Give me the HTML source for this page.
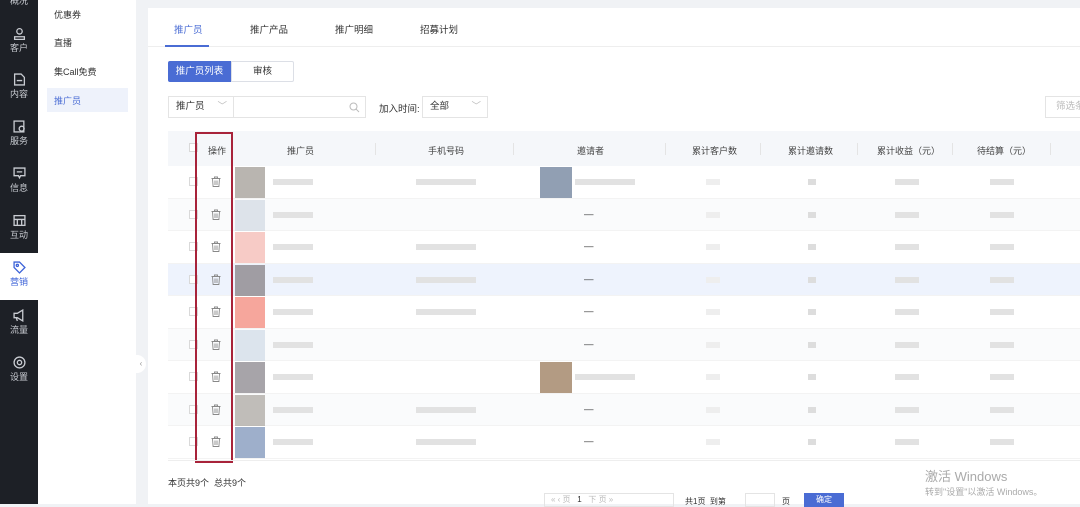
<!DOCTYPE html><html><head><meta charset="utf-8"><style>
*{margin:0;padding:0;box-sizing:border-box}
body{width:1080px;height:504px;overflow:hidden;background:#f0f2f5;font-family:"Liberation Sans","Noto Sans CJK SC",sans-serif;font-size:9.5px;color:#333;position:relative}
.a{position:absolute;white-space:nowrap}
.sb{left:0;top:0;width:38px;height:504px;background:#1d2026}
.ni{position:absolute;left:0;width:38px;text-align:center;color:#c9ccd2;font-size:9px}
.ni svg{display:block;margin:0 auto 1px}
.sm{left:38px;top:0;width:98px;height:504px;background:#fff}
.sm div{position:absolute;left:16px;font-size:9px;color:#333}
.card{left:148px;top:8px;width:932px;height:496px;background:#fff}
.g{background:#e2e2e2;position:absolute}
.row{position:absolute;left:168px;width:912px;height:32.5px;border-bottom:1px solid #f3f3f3}
.cb{position:absolute;left:21px;width:9px;height:9px;border:1px solid #d9d9d9;background:#fff}
.th{position:absolute;top:144px;font-size:9px;color:#444}
</style></head><body>
<div class="a sb"></div>
<div class="ni" style="top:-6px">概况</div>
<div class="ni" style="top:27px"><svg width="13" height="13" viewBox="0 0 12 12" fill="none" stroke="#c9ccd2" stroke-width="1.2"><circle cx="6" cy="4" r="2.5"/><path d="M1.5 11.5V9h9v2.5z"/></svg>客户</div>
<div class="ni" style="top:73px"><svg width="13" height="13" viewBox="0 0 12 12" fill="none" stroke="#c9ccd2" stroke-width="1.2"><path d="M1.5 1h6l3 3v7h-9z M3.5 7h5"/></svg>内容</div>
<div class="ni" style="top:120px"><svg width="13" height="13" viewBox="0 0 12 12" fill="none" stroke="#c9ccd2" stroke-width="1.2"><rect x="1" y="1" width="9" height="10"/><circle cx="8" cy="8" r="2.3"/></svg>服务</div>
<div class="ni" style="top:167px"><svg width="13" height="13" viewBox="0 0 12 12" fill="none" stroke="#c9ccd2" stroke-width="1.2"><path d="M1 1h10v7H7l-1 2-1-2H1z M3.5 4.5h5"/></svg>信息</div>
<div class="ni" style="top:214px"><svg width="13" height="13" viewBox="0 0 12 12" fill="none" stroke="#c9ccd2" stroke-width="1.2"><rect x="1" y="1.5" width="10" height="9"/><path d="M1 5h10M4 5v5M8 5v5"/></svg>互动</div>
<div class="a" style="left:0;top:253px;width:38px;height:47px;background:#fff"></div>
<div class="ni" style="top:261px;color:#3d63d8"><svg width="13" height="13" viewBox="0 0 12 12" fill="none" stroke="#3d63d8" stroke-width="1.2"><path d="M1 1h5l5 5-5 5-5-5z"/><circle cx="4" cy="4" r="1"/></svg>营销</div>
<div class="ni" style="top:309px"><svg width="13" height="13" viewBox="0 0 12 12" fill="none" stroke="#c9ccd2" stroke-width="1.2"><path d="M1 4h3l5-3v10L4 8H1z M3 8l1 3"/></svg>流量</div>
<div class="ni" style="top:356px"><svg width="13" height="13" viewBox="0 0 12 12" fill="none" stroke="#c9ccd2" stroke-width="1.2"><circle cx="6" cy="6" r="5"/><circle cx="6" cy="6" r="2"/></svg>设置</div>

<div class="a sm">
<div style="top:8px">优惠券</div><div style="top:36px">直播</div><div style="top:65px">集Call免费</div>
<div style="left:9px;top:88px;width:81px;height:24px;background:#eef2fb"></div>
<div style="top:94px;color:#4a6cd4">推广员</div>
</div>
<div class="a" style="left:136px;top:355px;width:10px;height:18px;background:#fff;border-radius:0 9px 9px 0;color:#999;font-size:8px;line-height:18px;text-align:center">‹</div>

<div class="a card"></div>
<div class="a" style="left:148px;top:46px;width:932px;height:1px;background:#eee"></div>
<div class="a" style="left:174px;top:22px;color:#4a6cd4">推广员</div>
<div class="a" style="left:250px;top:22px">推广产品</div>
<div class="a" style="left:335px;top:22px">推广明细</div>
<div class="a" style="left:420px;top:22px">招募计划</div>
<div class="a" style="left:165px;top:45px;width:44px;height:2px;background:#4a6cd4"></div>

<div class="a" style="left:168px;top:61px;width:63px;height:21px;background:#4a6cd4;color:#fff;line-height:21px;text-align:center;border-radius:2px 0 0 2px">推广员列表</div>
<div class="a" style="left:231px;top:61px;width:63px;height:21px;border:1px solid #dcdfe6;line-height:19px;text-align:center;border-radius:0 2px 2px 0">审核</div>

<div class="a" style="left:168px;top:96px;width:66px;height:22px;border:1px solid #e4e4e4;line-height:20px;padding-left:7px">推广员<span style="position:absolute;right:6px;color:#bbb">﹀</span></div>
<div class="a" style="left:233px;top:96px;width:133px;height:22px;border:1px solid #e4e4e4"><svg style="position:absolute;right:5px;top:5px" width="11" height="11" viewBox="0 0 11 11" fill="none" stroke="#bbb"><circle cx="4.5" cy="4.5" r="3.5"/><path d="M7 7l3 3"/></svg></div>
<div class="a" style="left:379px;top:101px">加入时间:</div>
<div class="a" style="left:422px;top:96px;width:66px;height:22px;border:1px solid #e4e4e4;line-height:20px;padding-left:7px">全部<span style="position:absolute;right:6px;color:#bbb">﹀</span></div>
<div class="a" style="left:1045px;top:96px;width:40px;height:22px;border:1px solid #e4e4e4;line-height:20px;padding-left:10px;color:#bbb;overflow:hidden">筛选条</div>

<div class="a" style="left:168px;top:131px;width:912px;height:35px;background:#f5f7fa"></div>
<div class="cb" style="left:189px;top:143px"></div>
<div class="th" style="left:208px">操作</div>
<div class="th" style="left:287px">推广员</div>
<div class="th" style="left:428px">手机号码</div>
<div class="th" style="left:577px">邀请者</div>
<div class="th" style="left:692px">累计客户数</div>
<div class="th" style="left:788px">累计邀请数</div>
<div class="th" style="left:877px">累计收益（元）</div>
<div class="th" style="left:977px">待结算（元）</div>
<div class="a" style="left:375px;top:143px;width:1px;height:12px;background:#e4e4e4"></div>
<div class="a" style="left:513px;top:143px;width:1px;height:12px;background:#e4e4e4"></div>
<div class="a" style="left:665px;top:143px;width:1px;height:12px;background:#e4e4e4"></div>
<div class="a" style="left:760px;top:143px;width:1px;height:12px;background:#e4e4e4"></div>
<div class="a" style="left:857px;top:143px;width:1px;height:12px;background:#e4e4e4"></div>
<div class="a" style="left:952px;top:143px;width:1px;height:12px;background:#e4e4e4"></div>
<div class="a" style="left:1050px;top:143px;width:1px;height:12px;background:#e4e4e4"></div>

<div id="rows"></div>
<script>
var cols=["#8b847c","#c9d4de","#f2a8a0","#6c6468","#f06a5a","#c8d6e2","#6d6870","#9a948c","#5d7aa8"];
var tr='<svg width="10" height="11" viewBox="0 0 10 11" fill="none" stroke="#888" stroke-width="0.9"><path d="M0.5 2.5h9M3.5 2.5V1h3v1.5M1.5 2.5l.6 8h5.8l.6-8M4 4.5v4.5M6 4.5v4.5"/></svg>';
var h='';
for(var i=0;i<9;i++){var y=166+i*32.5;var bg=i==3?'#eef3fd':(i%2?'#fafbfc':'#fff');
h+='<div class="row" style="top:'+y+'px;background:'+bg+'"></div>';
h+='<div class="cb" style="left:189px;top:'+(y+11)+'px"></div>';
h+='<div class="a" style="left:211px;top:'+(y+10)+'px">'+tr+'</div>';
h+='<div class="a" style="left:235px;top:'+(y+1)+'px;width:30px;height:31px;background:'+cols[i]+';opacity:.6"></div>';
h+='<div class="g" style="left:273px;top:'+(y+13)+'px;width:40px;height:6px"></div>';
if([0,2,3,4,8,7].indexOf(i)>=0)h+='<div class="g" style="left:416px;top:'+(y+13)+'px;width:60px;height:6px"></div>';
if(i==0||i==6){h+='<div class="a" style="left:540px;top:'+(y+1)+'px;width:32px;height:31px;background:'+(i==0?'#6c7f9a':'#9a7a5a')+';opacity:.75"></div><div class="g" style="left:575px;top:'+(y+13)+'px;width:60px;height:6px"></div>';}
else h+='<div class="a" style="left:584px;top:'+(y+10)+'px;color:#333">—</div>';
h+='<div class="g" style="left:706px;top:'+(y+13)+'px;width:14px;height:6px;background:#eee"></div>';
h+='<div class="g" style="left:808px;top:'+(y+13)+'px;width:8px;height:6px;background:#ddd"></div>';
h+='<div class="g" style="left:895px;top:'+(y+13)+'px;width:24px;height:6px"></div>';
h+='<div class="g" style="left:990px;top:'+(y+13)+'px;width:24px;height:6px"></div>';}
document.getElementById('rows').innerHTML=h;
</script>
<div class="a" style="left:195px;top:132px;width:38px;height:331px;border:2px solid #a8233a"></div>
<div class="a" style="left:168px;top:460px;width:912px;height:1px;background:#eee"></div>
<div class="a" style="left:168px;top:476px;font-size:9px">本页共9个&nbsp; 总共9个</div>
<div class="a" style="left:544px;top:493px;width:130px;height:14px;border:1px solid #e4e4e4;color:#bbb;padding-left:6px;font-size:8px">«  ‹  页 &nbsp; <span style="color:#333">1</span> &nbsp; 下 页 »</div>
<div class="a" style="left:685px;top:496px;font-size:8px">共1页 &nbsp;到第</div>
<div class="a" style="left:745px;top:493px;width:30px;height:14px;border:1px solid #e4e4e4"></div>
<div class="a" style="left:782px;top:496px;font-size:8px">页</div>
<div class="a" style="left:804px;top:493px;width:40px;height:14px;background:#4a6cd4;color:#fff;text-align:center;font-size:8px;line-height:14px">确定</div>
<div class="a" style="left:925px;top:466px;font-size:13px;color:#aaa">激活 Windows</div>
<div class="a" style="left:925px;top:485px;font-size:9px;color:#aaa">转到"设置"以激活 Windows。</div>
</body></html>
